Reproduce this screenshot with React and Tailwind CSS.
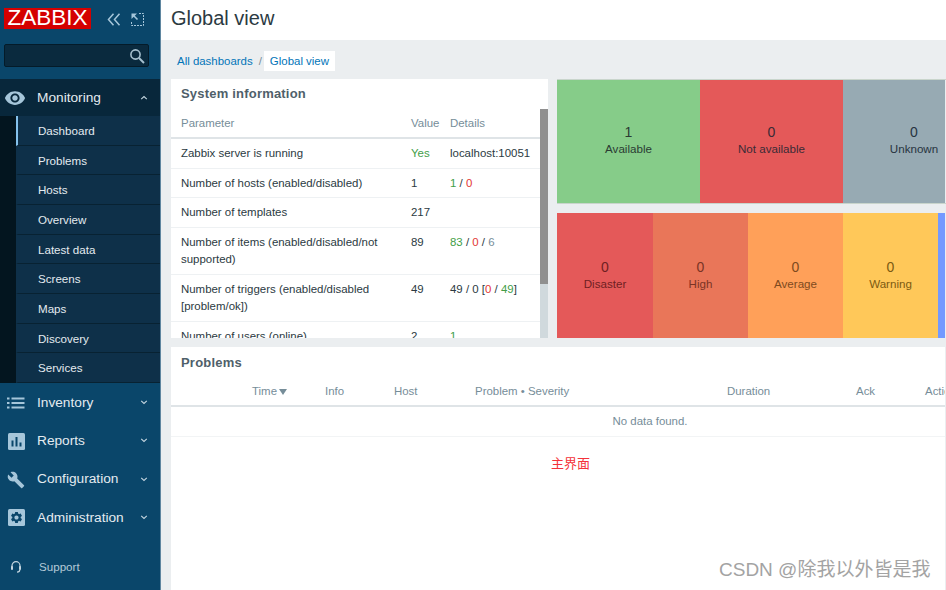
const eye = "M12 4.5C7 4.5 2.73 7.61 1 12c1.73 4.39 6 7.5 11 7.5s9.27-3.11 11-7.5c-1.73-4.39-6-7.5-11-7.5zM12 17c-2.76 0-5-2.24-5-5s2.24-5 5-5 5 2.24 5 5-2.24 5-5 5zm0-8c-1.66 0-3 1.34-3 3s1.34 3 3 3 3-1.34 3-3-1.34-3-3-3z";
const wrench = "M22.7 19l-9.1-9.1c.9-2.3.4-5-1.5-6.9-2-2-5-2.4-7.4-1.3L9 6 6 9 1.6 4.7C.4 7.1.9 10.1 2.9 12.1c1.9 1.9 4.6 2.4 6.9 1.5l9.1 9.1c.4.4 1 .4 1.4 0l2.3-2.3c.5-.4.5-1.1.1-1.4z";
const gear = "M19.14 12.94c.04-.3.06-.61.06-.94 0-.32-.02-.64-.07-.94l2.03-1.58c.18-.14.23-.41.12-.61l-1.92-3.32c-.12-.22-.37-.29-.59-.22l-2.39.96c-.5-.38-1.03-.7-1.62-.94l-.36-2.54c-.04-.24-.24-.41-.48-.41h-3.84c-.24 0-.43.17-.47.41l-.36 2.54c-.59.24-1.13.57-1.62.94l-2.39-.96c-.22-.08-.47 0-.59.22L2.74 8.87c-.12.21-.08.47.12.61l2.03 1.58c-.05.3-.09.63-.09.94s.02.64.07.94l-2.03 1.58c-.18.14-.23.41-.12.61l1.92 3.32c.12.22.37.29.59.22l2.39-.96c.5.38 1.03.7 1.62.94l.36 2.54c.05.24.24.41.48.41h3.84c.24 0 .44-.17.47-.41l.36-2.54c.59-.24 1.13-.56 1.62-.94l2.39.96c.22.08.47 0 .59-.22l1.92-3.32c.12-.22.07-.47-.12-.61l-2.01-1.58zM12 15.6c-1.98 0-3.6-1.62-3.6-3.6s1.62-3.6 3.6-3.6 3.6 1.62 3.6 3.6-1.62 3.6-3.6 3.6z";

function Chevron({ up }) {
  return (
    <svg width="8" height="6" viewBox="0 0 8 6" fill="none" stroke="#c5d6e0" strokeWidth="1.1" className="absolute left-[140px] top-1/2 -translate-y-1/2">
      <path d={up ? "M1.2 4.2 4 1.6l2.8 2.6" : "M1.2 1.8 4 4.4l2.8-2.6"} />
    </svg>
  );
}

function NavIcon({ name }) {
  if (name === "Inventory")
    return (
      <svg width="18" height="12" viewBox="0 0 18 12" fill="#a6c6da">
        <rect x="0" y="0.5" width="2.5" height="2" /><rect x="4.5" y="0.5" width="13" height="2" />
        <rect x="0" y="5" width="2.5" height="2" /><rect x="4.5" y="5" width="13" height="2" />
        <rect x="0" y="9.5" width="2.5" height="2" /><rect x="4.5" y="9.5" width="13" height="2" />
      </svg>
    );
  if (name === "Reports")
    return (
      <svg width="17" height="17" viewBox="0 0 17 17">
        <rect width="17" height="17" rx="1.5" fill="#a6c6da" />
        <rect x="3.5" y="7.5" width="2" height="6" fill="#0a466a" />
        <rect x="7.5" y="4" width="2" height="9.5" fill="#0a466a" />
        <rect x="11.5" y="9.5" width="2" height="4" fill="#0a466a" />
      </svg>
    );
  if (name === "Configuration")
    return (
      <svg width="18" height="18" viewBox="0 0 24 24" fill="#a6c6da"><path d={wrench} /></svg>
    );
  return (
    <svg width="17" height="17" viewBox="0 0 17 17">
      <rect width="17" height="17" rx="1.5" fill="#a6c6da" />
      <svg x="1.5" y="1.5" width="14" height="14" viewBox="0 0 24 24" fill="#0a466a"><path d={gear} /></svg>
    </svg>
  );
}

const sub = ["Dashboard", "Problems", "Hosts", "Overview", "Latest data", "Screens", "Maps", "Discovery", "Services"];

function Sidebar() {
  return (
    <aside className="flex h-[590px] w-[161px] shrink-0 flex-col border-r border-[#5f86a0] bg-[#0a466a]">
      <div className="flex h-[44px] items-start pl-1 pt-2">
        <div className="flex h-[21px] w-[87px] items-center justify-center bg-[#d40000] text-[22.5px] leading-none text-white">ZABBIX</div>
        <svg width="14" height="13" viewBox="0 0 14 13" fill="none" stroke="#a6c6da" strokeWidth="1.5" className="ml-[16px] mt-[5px]">
          <path d="M6.5 .8 1.5 6.5l5 5.7M12.5 .8 7.5 6.5l5 5.7" />
        </svg>
        <svg width="13" height="13" viewBox="0 0 13 13" fill="none" stroke="#a6c6da" className="ml-[10px] mt-[5px]">
          <path d="M8 .5h4.5v12H.5V8" strokeDasharray="2 1" />
          <path d="M6.5 6.5 2 2" strokeWidth="1.6" />
          <path d="M.5.5h5.5L.5 6z" fill="#a6c6da" stroke="none" />
        </svg>
      </div>
      <div className="ml-1 flex h-[23px] w-[145px] items-center justify-end rounded-[2px] border border-[#041b29] bg-[#0a2a3e] pr-[3px]">
        <svg width="16" height="16" viewBox="0 0 16 16" fill="none" stroke="#a6c0cf" strokeWidth="1.6">
          <circle cx="6.5" cy="6.5" r="4.6" /><path d="m10 10 5 5" strokeWidth="2" />
        </svg>
      </div>
      <div className="mt-3 bg-[#08273b]">
        <div className="relative flex h-[37px] items-center pt-[1px] text-[13.7px] text-[#e4ebf0]">
          <svg width="22" height="22" viewBox="0 0 24 24" fill="#a6c6da" className="ml-1"><path d={eye} /></svg>
          <span className="ml-[11px]">Monitoring</span>
          <Chevron up />
        </div>
        <div className="flex bg-[#03151f]">
          <div className="w-4 shrink-0" />
          <div className="flex-1">
            {sub.map((s, i) => (
              <div key={s} className={`flex h-[29.67px] items-center border-b border-l-2 border-b-[#082232] bg-[#0e3049] pl-[20px] pt-[1px] text-[11.6px] text-[#e4ebf0] ${i === 0 ? "border-l-[#84c1ec]" : "border-l-[#0e3049]"}`}>
                {s}
              </div>
            ))}
          </div>
        </div>
      </div>
      <div>
        {["Inventory", "Reports", "Configuration", "Administration"].map((n) => (
          <div key={n} className="relative flex h-[38.3px] items-center pt-[2px] text-[13.7px] text-[#e4ebf0]">
            <div className="ml-[7px] flex w-[18px] justify-center"><NavIcon name={n} /></div>
            <span className="ml-3">{n}</span>
            <Chevron />
          </div>
        ))}
      </div>
      <div className="mt-[16px] flex h-[30px] items-center text-[11.6px] text-[#b5cad8]">
        <svg width="12" height="13" viewBox="0 0 12 13" fill="none" stroke="#c5d6e0" strokeWidth="1.2" className="ml-[10px]">
          <path d="M2 6V4.7a4 4 0 0 1 8 0V6" />
          <path d="M1 5.2h2v3.6H1zM9 5.2h2v3.6H9z" fill="#c5d6e0" stroke="none" />
          <path d="M9.8 8.5c0 1.8-1 2.6-2.8 2.6" />
        </svg>
        <span className="ml-[17px]">Support</span>
      </div>
    </aside>
  );
}

function Row({ p, v, d, h, vc }) {
  return (
    <div className={`flex border-b border-[#eef1f3] pl-[10px] pt-[6px] text-[11.45px] leading-[17px] text-[#2b3a42] ${h}`}>
      <div className="w-[230px] shrink-0 pr-[30px]">{p}</div>
      <div className={`w-[39px] shrink-0 ${vc || ""}`}>{v}</div>
      <div className="whitespace-nowrap">{d}</div>
    </div>
  );
}

const G = ({ children }) => <span className="text-[#429e47]">{children}</span>;
const R = ({ children }) => <span className="text-[#e33734]">{children}</span>;

function SystemInfo() {
  return (
    <section className="flex h-[259px] w-[377px] shrink-0 flex-col overflow-hidden bg-white">
      <div className="flex h-[30px] items-center pl-[10px] text-[13px] font-bold tracking-[0.2px] text-[#4f5f6a]">System information</div>
      <div className="flex min-h-0 flex-1">
        <div className="min-w-0 flex-1 overflow-hidden">
          <div className="flex h-[30px] items-center border-b-2 border-[#dfe4e7] pl-[10px] pt-[1px] text-[11.45px] text-[#768d99]">
            <div className="w-[230px]">Parameter</div>
            <div className="w-[39px]">Value</div>
            <div>Details</div>
          </div>
          <Row h="h-[29.5px]" p="Zabbix server is running" v="Yes" vc="text-[#429e47]" d="localhost:10051" />
          <Row h="h-[29.5px]" p="Number of hosts (enabled/disabled)" v="1" d={<><G>1</G> / <R>0</R></>} />
          <Row h="h-[29.5px]" p="Number of templates" v="217" d="" />
          <Row h="h-[47px]" p="Number of items (enabled/disabled/not supported)" v="89" d={<><G>83</G> / <R>0</R> / <span className="text-[#768d99]">6</span></>} />
          <Row h="h-[47px]" p="Number of triggers (enabled/disabled [problem/ok])" v="49" d={<>49 / 0 [<R>0</R> / <G>49</G>]</>} />
          <Row h="h-[47px]" p="Number of users (online)" v="2" d={<G>1</G>} />
        </div>
        <div className="flex w-2 shrink-0 flex-col bg-[#d0d9dd]">
          <div className="h-[175px] bg-[#909090]" />
        </div>
      </div>
    </section>
  );
}

function Tile({ n, label, bg, text, extra }) {
  return (
    <div className={`flex h-full flex-col items-center justify-center overflow-hidden ${bg} ${text} ${extra || "pb-[2px]"}`}>
      <div className="text-[14px] leading-[18px]">{n}</div>
      <div className="whitespace-nowrap text-[11.6px] leading-[16px]">{label}</div>
    </div>
  );
}

function Tiles() {
  return (
    <div className="flex min-w-0 flex-1 flex-col gap-[9px]">
      <div className="grid h-[125px] grid-cols-[143px_143px_102px] border-y border-[#c9d5cc]">
        <Tile n="1" label="Available" bg="bg-[#86cc89]" text="text-[#2a3b33]" extra="pb-[4px]" />
        <Tile n="0" label="Not available" bg="bg-[#e45959]" text="text-[#3a2b36]" extra="pb-[4px]" />
        <Tile n="0" label="Unknown" bg="bg-[#97aab3]" text="text-[#27343f]" extra="pb-[4px] pl-[40px]" />
      </div>
      <div className="grid h-[125px] grid-cols-[96px_95px_95px_95px_7px]">
        <Tile n="0" label="Disaster" bg="bg-[#e45959]" text="text-[#6f1f22]" />
        <Tile n="0" label="High" bg="bg-[#e97659]" text="text-[#7a3425]" />
        <Tile n="0" label="Average" bg="bg-[#ffa059]" text="text-[#7e4a1e]" />
        <Tile n="0" label="Warning" bg="bg-[#ffc859]" text="text-[#7c5a12]" />
        <div className="bg-[#7499ff]" />
      </div>
    </div>
  );
}

function Problems() {
  const cols = [
    ["Time", "w-[73px]"],
    ["Info", "w-[69px]"],
    ["Host", "w-[81px]"],
    ["Problem • Severity", "w-[252px]"],
    ["Duration", "w-[129px]"],
    ["Ack", "w-[69px]"],
    ["Actions", "w-[60px]"],
  ];
  return (
    <section className="mt-[9px] flex-1 overflow-hidden bg-white">
      <div className="flex h-[30px] items-center pl-[10px] pt-[2px] text-[13px] font-bold tracking-[0.2px] text-[#4f5f6a]">Problems</div>
      <div className="flex h-[30px] items-center overflow-hidden whitespace-nowrap border-b-2 border-[#dfe4e7] pl-[81px] pt-[2px] text-[11.45px] text-[#768d99]">
        {cols.map(([c, w]) => (
          <div key={c} className={`${w} flex shrink-0 items-center`}>
            {c}
            {c === "Time" && (
              <svg width="8" height="6" viewBox="0 0 8 6" fill="#768d99" className="ml-[2px]"><path d="M0 0h8L4 6z" /></svg>
            )}
          </div>
        ))}
      </div>
      <div className="flex h-[30px] items-center justify-center border-b border-[#f2f4f5] pl-[184px] pt-[1px] text-[11.45px] text-[#768d99]">No data found.</div>
      <div className="mt-[17px] pl-[380px] font-['Noto_Sans_CJK_SC',sans-serif] text-[13px] leading-[18px] text-[#f4333a]">主界面</div>
    </section>
  );
}

export default function App() {
  return (
    <div className="relative flex h-[590px] w-[946px] overflow-hidden bg-[#ebeef0] font-['Liberation_Sans',sans-serif]">
      <Sidebar />
      <main className="flex min-w-0 flex-1 flex-col">
        <header className="flex h-[40px] shrink-0 items-center bg-white pb-[5px] pl-[10px] text-[20px] text-[#2b3a42]">Global view</header>
        <nav className="flex h-[39px] shrink-0 items-start pl-[10px] pt-[11px] text-[11.45px] leading-[20px] text-[#0275b8]">
          <span className="pl-[6px]">All dashboards</span>
          <span className="ml-[6px] text-[#768d99]">/</span>
          <span className="ml-[2px] bg-white px-[6px]">Global view</span>
        </nav>
        <div className="flex shrink-0 gap-[9px] pl-[10px]">
          <SystemInfo />
          <Tiles />
        </div>
        <div className="flex min-h-0 flex-1 flex-col pl-[10px] pr-px">
          <Problems />
        </div>
      </main>
      <div className="absolute left-[719px] top-[557px] whitespace-nowrap font-['Liberation_Sans','Noto_Sans_CJK_SC',sans-serif] text-[19px] leading-[26px] text-[#a3a3a3]">CSDN @除我以外皆是我</div>
    </div>
  );
}
